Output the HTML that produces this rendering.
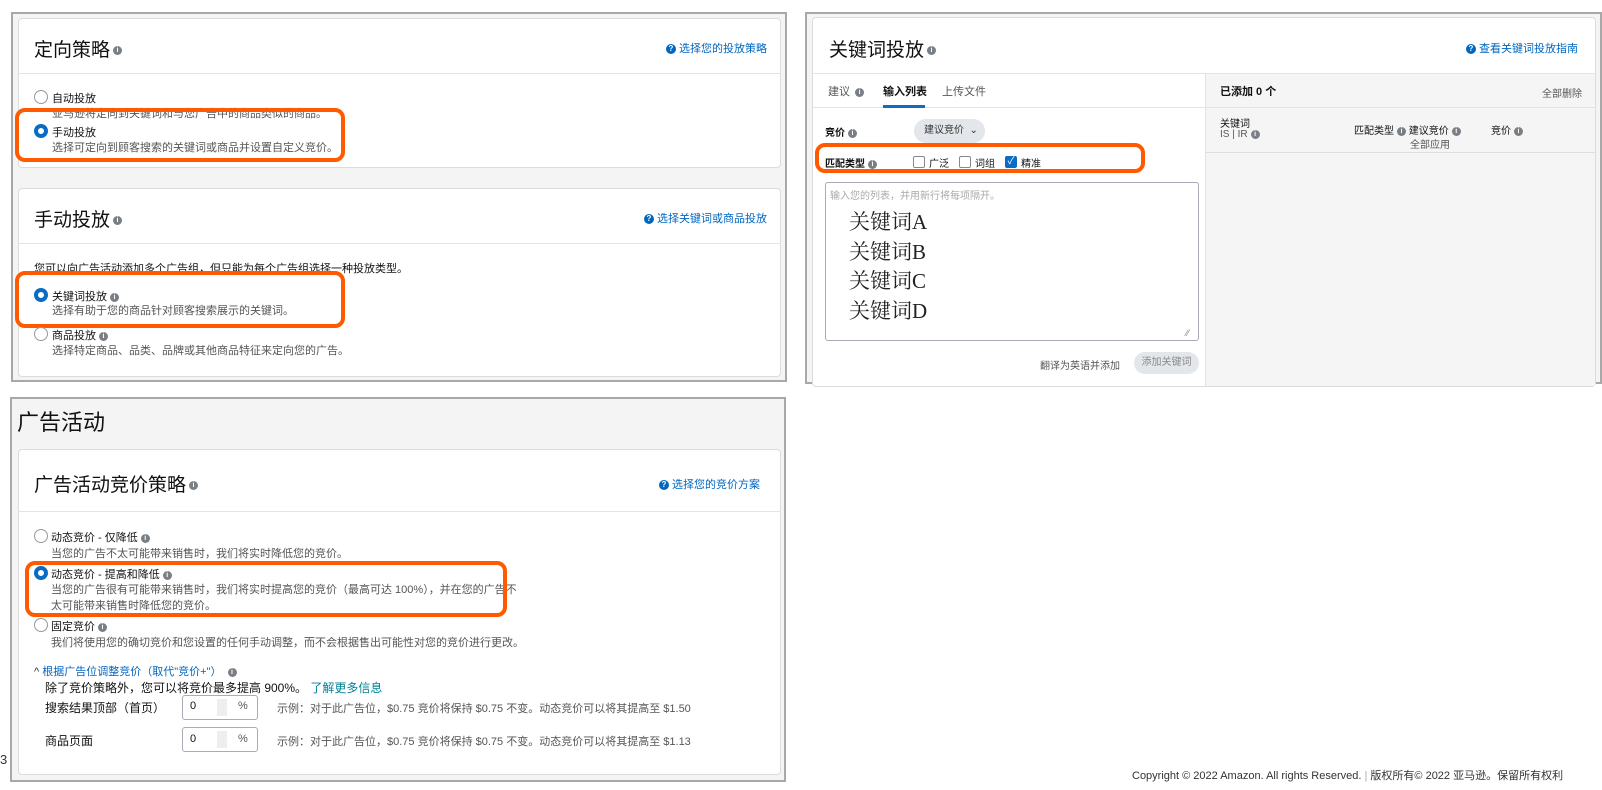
<!DOCTYPE html>
<html><head><meta charset="utf-8"><style>
*{margin:0;padding:0;box-sizing:border-box}
body{width:1602px;height:790px;background:#fff;position:relative;overflow:hidden;font-family:"Liberation Sans","Noto Sans CJK SC",sans-serif;color:#111;font-size:11px}
.a{position:absolute;white-space:nowrap}
.outer{position:absolute;border:2px solid #a8a8a8;background:#f4f4f4}
.card{position:absolute;background:#fff;border:1px solid #dcdcdc;border-radius:4px}
.hl{position:absolute;height:1px;background:#e3e3e3}
.t18{font-size:19px;color:#111}
.lnk{color:#0066c0;font-size:11px}
.q{display:inline-block;width:10px;height:10px;border-radius:50%;background:#0066c0;color:#fff;font-size:8px;line-height:10px;text-align:center;font-weight:bold;vertical-align:middle;margin-right:3px}
.i{display:inline-block;width:9px;height:9px;border-radius:50%;background:#7a7f85;color:#fff;font-size:7px;line-height:9px;text-align:center;font-weight:bold;vertical-align:middle;margin-left:3px}
.t18 .i{vertical-align:middle}
.r{position:absolute;width:14px;height:14px;border-radius:50%;border:1px solid #999;background:#fff}
.r.on{border:4px solid #0a6cc4}
.g{color:#555}
.box{position:absolute;border:4px solid #ff5a00;border-radius:10px}
.cb{position:absolute;width:12px;height:12px;border:1px solid #888;border-radius:2px;background:#fff}
</style></head><body>

<!-- Panel 1 -->
<div class="outer" style="left:11px;top:12px;width:776px;height:370px"></div>
<div class="card" style="left:18px;top:18px;width:763px;height:150px"></div>
<div class="hl" style="left:18px;top:73px;width:763px"></div>
<div class="a t18" style="left:34px;top:35px">定向策略<span class="i">i</span></div>
<div class="a lnk" style="right:835px;top:40px"><span class="q">?</span>选择您的投放策略</div>
<div class="r" style="left:34px;top:90px"></div>
<div class="a" style="left:52px;top:90px">自动投放</div>
<div class="a g" style="left:52px;top:105px">亚马逊将定向到关键词和与您广告中的商品类似的商品。</div>
<div class="r on" style="left:34px;top:124px"></div>
<div class="a" style="left:52px;top:124px">手动投放</div>
<div class="a g" style="left:52px;top:139px">选择可定向到顾客搜索的关键词或商品并设置自定义竞价。</div>
<div class="box" style="left:15px;top:108px;width:330px;height:54px"></div>

<div class="card" style="left:18px;top:188px;width:763px;height:189px"></div>
<div class="hl" style="left:18px;top:243px;width:763px"></div>
<div class="a t18" style="left:34px;top:205px">手动投放<span class="i">i</span></div>
<div class="a lnk" style="right:835px;top:210px"><span class="q">?</span>选择关键词或商品投放</div>
<div class="a" style="left:34px;top:260px">您可以向广告活动添加多个广告组，但只能为每个广告组选择一种投放类型。</div>
<div class="r on" style="left:34px;top:288px"></div>
<div class="a" style="left:52px;top:288px">关键词投放<span class="i">i</span></div>
<div class="a g" style="left:52px;top:302px">选择有助于您的商品针对顾客搜索展示的关键词。</div>
<div class="box" style="left:15px;top:271px;width:330px;height:57px"></div>
<div class="r" style="left:34px;top:327px"></div>
<div class="a" style="left:52px;top:327px">商品投放<span class="i">i</span></div>
<div class="a g" style="left:52px;top:342px">选择特定商品、品类、品牌或其他商品特征来定向您的广告。</div>

<!-- Panel 2 -->
<div class="outer" style="left:805px;top:12px;width:797px;height:372px"></div>
<div class="card" style="left:812px;top:17px;width:784px;height:370px"></div>
<div class="hl" style="left:812px;top:73px;width:784px"></div>
<div class="a t18" style="left:829px;top:35px">关键词投放<span class="i">i</span></div>
<div class="a lnk" style="right:24px;top:40px"><span class="q">?</span>查看关键词投放指南</div>
<div style="position:absolute;left:1205px;top:74px;width:390px;height:312px;background:#f5f5f5;border-left:1px solid #e3e3e3"></div>
<div class="hl" style="left:812px;top:107px;width:784px"></div>
<div class="hl" style="left:1205px;top:152px;width:390px;background:#dedede"></div>
<div class="a g" style="left:828px;top:83px">建议 <span class="i" style="margin-left:2px">i</span></div>
<div class="a" style="left:883px;top:83px;font-weight:bold">输入列表</div>
<div style="position:absolute;left:883px;top:105px;width:42px;height:3px;background:#0a6cc4"></div>
<div class="a g" style="left:942px;top:83px">上传文件</div>
<div class="a" style="left:1220px;top:83px;font-weight:bold">已添加 0 个</div>
<div class="a g" style="right:20px;top:85px;font-size:10px">全部删除</div>
<div class="a" style="left:1220px;top:115px;font-size:10px">关键词</div>
<div class="a g" style="left:1220px;top:129px;font-size:10px">IS | IR<span class="i">i</span></div>
<div class="a" style="left:1354px;top:122px;font-size:10px">匹配类型<span class="i">i</span> 建议竞价<span class="i">i</span></div>
<div class="a g" style="left:1410px;top:136px;font-size:10px">全部应用</div>
<div class="a" style="left:1491px;top:122px;font-size:10px">竞价<span class="i">i</span></div>

<div class="a" style="left:825px;top:124px;font-size:10px;font-weight:bold">竞价<span class="i">i</span></div>
<div style="position:absolute;left:914px;top:119px;width:71px;height:24px;border-radius:12px;background:#e3e6ea;font-size:10px;line-height:24px;padding-left:10px;color:#333">建议竞价 &nbsp;⌄</div>
<div class="a" style="left:825px;top:155px;font-size:10px;font-weight:bold">匹配类型<span class="i">i</span></div>
<div class="cb" style="left:913px;top:156px"></div><div class="a" style="left:929px;top:155px;font-size:10px">广泛</div>
<div class="cb" style="left:959px;top:156px"></div><div class="a" style="left:975px;top:155px;font-size:10px">词组</div>
<div class="cb" style="left:1005px;top:156px;background:#0a6cc4;border-color:#0a6cc4;color:#fff;font-size:10px;line-height:10px;text-align:center">✓</div><div class="a" style="left:1021px;top:155px;font-size:10px">精准</div>
<div class="box" style="left:815px;top:143px;width:330px;height:30px"></div>
<div style="position:absolute;left:825px;top:182px;width:374px;height:159px;border:1px solid #aab;border-radius:3px;background:#fff"></div>
<div class="a" style="left:830px;top:187px;font-size:10px;color:#aaa">输入您的列表，并用新行将每项隔开。</div>
<div class="a" style="left:849px;top:208px;font-family:'Liberation Serif','Noto Serif CJK SC',serif;font-size:21px;line-height:29.5px;color:#222">关键词A<br>关键词B<br>关键词C<br>关键词D</div>
<div class="a" style="left:1186px;top:328px;color:#888;font-size:9px">⁄⁄</div>
<div class="a g" style="left:1040px;top:357px;font-size:10px">翻译为英语并添加</div>
<div style="position:absolute;left:1134px;top:352px;width:65px;height:22px;border-radius:11px;background:#e3e6ea;color:#888;font-size:10px;line-height:22px;text-align:center">添加关键词</div>

<!-- Panel 3 -->
<div class="outer" style="left:10px;top:397px;width:776px;height:385px"></div>
<div class="a" style="left:17px;top:405px;font-size:22px">广告活动</div>
<div class="card" style="left:18px;top:449px;width:763px;height:326px"></div>
<div class="hl" style="left:18px;top:511px;width:763px"></div>
<div class="a t18" style="left:34px;top:470px">广告活动竞价策略<span class="i">i</span></div>
<div class="a lnk" style="right:842px;top:476px"><span class="q">?</span>选择您的竞价方案</div>
<div class="r" style="left:34px;top:529px"></div>
<div class="a" style="left:51px;top:529px">动态竞价 - 仅降低<span class="i">i</span></div>
<div class="a g" style="left:51px;top:545px">当您的广告不太可能带来销售时，我们将实时降低您的竞价。</div>
<div class="r on" style="left:34px;top:566px"></div>
<div class="a" style="left:51px;top:566px">动态竞价 - 提高和降低<span class="i">i</span></div>
<div class="a g" style="left:51px;top:581px">当您的广告很有可能带来销售时，我们将实时提高您的竞价（最高可达 100%），并在您的广告不</div>
<div class="a g" style="left:51px;top:597px">太可能带来销售时降低您的竞价。</div>
<div class="box" style="left:25px;top:561px;width:482px;height:56px"></div>
<div class="r" style="left:34px;top:618px"></div>
<div class="a" style="left:51px;top:618px">固定竞价<span class="i">i</span></div>
<div class="a g" style="left:51px;top:634px">我们将使用您的确切竞价和您设置的任何手动调整，而不会根据售出可能性对您的竞价进行更改。</div>
<div class="a lnk" style="left:34px;top:663px"><span style="color:#333">^</span> 根据广告位调整竞价（取代"竞价+"） <span class="i">i</span></div>
<div class="a" style="left:45px;top:679px;font-size:12px">除了竞价策略外，您可以将竞价最多提高 900%。 <span style="color:#008296">了解更多信息</span></div>
<div class="a" style="left:45px;top:699px;font-size:12px">搜索结果顶部（首页）</div>
<div style="position:absolute;left:182px;top:695px;width:76px;height:25px;border:1px solid #aab;border-radius:3px;background:#fff"></div>
<div class="a" style="left:190px;top:700px;font-size:11px">0</div>
<div style="position:absolute;left:217px;top:699px;width:10px;height:17px;background:#eee"></div>
<div class="a g" style="left:238px;top:700px">%</div>
<div class="a g" style="left:277px;top:700px">示例：对于此广告位，$0.75 竞价将保持 $0.75 不变。动态竞价可以将其提高至 $1.50</div>
<div class="a" style="left:45px;top:732px;font-size:12px">商品页面</div>
<div style="position:absolute;left:182px;top:727px;width:76px;height:25px;border:1px solid #aab;border-radius:3px;background:#fff"></div>
<div class="a" style="left:190px;top:733px;font-size:11px">0</div>
<div style="position:absolute;left:217px;top:731px;width:10px;height:17px;background:#eee"></div>
<div class="a g" style="left:238px;top:733px">%</div>
<div class="a g" style="left:277px;top:733px">示例：对于此广告位，$0.75 竞价将保持 $0.75 不变。动态竞价可以将其提高至 $1.13</div>
<div class="a" style="left:0px;top:752px;font-size:13px;color:#333">3</div>

<div class="a" style="left:1132px;top:767px;font-size:11px;color:#333">Copyright © 2022 Amazon. All rights Reserved. <span style="color:#aaa">|</span> 版权所有© 2022 亚马逊。保留所有权利</div>
</body></html>
